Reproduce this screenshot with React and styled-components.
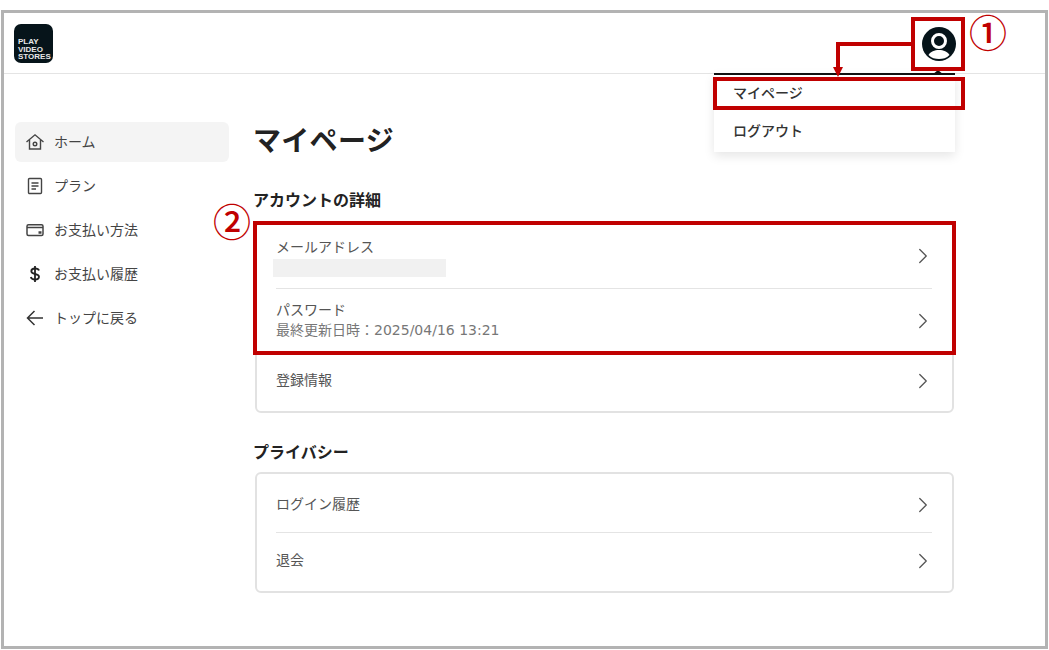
import React from "react";
import styled, { createGlobalStyle } from "styled-components";
import { ChevronRight } from "lucide-react";

const GlobalStyle = createGlobalStyle`
  html, body {
    margin: 0;
    padding: 0;
    background: #fff;
  }
  body {
    font-family: "Noto Sans CJK JP", "Noto Sans", sans-serif;
    color: #222;
  }
`;

const Frame = styled.div`
  position: relative;
  box-sizing: border-box;
  width: 1047px;
  height: 639px;
  margin: 10px 0 0 1px;
  border: 3px solid #b3b3b3;
  background: #fff;
`;

const Header = styled.header`
  box-sizing: border-box;
  height: 61px;
  padding: 11px 10px 0;
  border-bottom: 1px solid #e4e4e4;
`;

const Logo = styled.div`
  box-sizing: border-box;
  width: 39px;
  height: 39px;
  border-radius: 7px;
  background: #06141a;
  color: #e8e8e8;
  font-family: "Liberation Sans", sans-serif;
  font-size: 8px;
  font-weight: 700;
  line-height: 7.5px;
  padding: 14px 0 0 4px;
  white-space: nowrap;
`;

const Body = styled.div`
  display: flex;
`;

const Sidebar = styled.nav`
  box-sizing: border-box;
  width: 250px;
  padding: 48px 0 0 11px;
`;

const NavItem = styled.div`
  box-sizing: border-box;
  display: flex;
  align-items: center;
  gap: 9px;
  width: 214px;
  height: 40px;
  margin-bottom: 4px;
  padding-left: 10px;
  border-radius: 6px;
  background: ${(p) => (p.$active ? "#f4f4f4" : "transparent")};
  color: #444;
  font-size: 14px;
  svg {
    flex: none;
  }
`;

const NavLabel = styled.span`
  margin-top: -3px;
`;

const Main = styled.main`
  width: 700px;
  padding-top: 44px;
`;

const Title = styled.h1`
  margin: -1px 0 27px -1px;
  font-size: 28px;
  line-height: 44px;
  letter-spacing: 0.3px;
  font-weight: 700;
  color: #222;
`;

const SectionTitle = styled.h2`
  margin: 0 0 ${(p) => p.$after}px -1px;
  font-size: 16px;
  line-height: 22px;
  font-weight: 700;
  color: #222;
`;

const Card = styled.div`
  box-sizing: border-box;
  margin: 0 0 ${(p) => p.$gap || 0}px 1px;
  width: 699px;
  padding: 0 20px 0 19px;
  border: 2px solid #e2e2e2;
  border-radius: 6px;
`;

const Row = styled.div`
  box-sizing: border-box;
  display: flex;
  align-items: center;
  justify-content: space-between;
  height: ${(p) => p.$h}px;
  padding-top: ${(p) => p.$pt || 0}px;
  padding-bottom: ${(p) => p.$pb || 0}px;
  border-bottom: ${(p) => (p.$last ? "none" : "1px solid #e4e4e4")};
  color: #555;
  svg {
    flex: none;
    margin-top: ${(p) => p.$chevron || 0}px;
    margin-right: -4px;
    color: #555;
  }
`;

const RowText = styled.div`
  display: flex;
  flex-direction: column;
  font-size: 14px;
  line-height: 20px;
`;

const SingleLine = styled(RowText)`
  margin-top: -4px;
`;

const Sub = styled.span`
  margin-top: 1px;
  font-family: "DejaVu Sans", "Noto Sans CJK JP", sans-serif;
  font-size: 14px;
  line-height: 20px;
  color: #777;
`;

const Masked = styled.span`
  display: block;
  width: 173px;
  height: 18px;
  margin: 3px 0 0 -3px;
  background: #f1f1f1;
`;

const Avatar = styled.div`
  position: absolute;
  top: 14px;
  left: 918px;
  width: 34px;
  height: 34px;
`;

const Menu = styled.div`
  position: absolute;
  top: 60px;
  left: 710px;
  width: 241px;
  height: 77px;
  border-top: 2px solid #111;
  background: #fff;
  box-shadow: 0 4px 10px rgba(0, 0, 0, 0.1);
`;

const Notch = styled.div`
  position: absolute;
  top: -5px;
  left: 218px;
  width: 0;
  height: 0;
  border-left: 6px solid transparent;
  border-right: 6px solid transparent;
  border-bottom: 5px solid #111;
`;

const MenuItem = styled.div`
  box-sizing: border-box;
  display: flex;
  align-items: center;
  height: 38px;
  padding: 0 0 5px 19px;
  font-size: 14px;
  font-weight: 500;
  color: #333;
`;

const RedBox = styled.div`
  position: absolute;
  box-sizing: border-box;
  top: ${(p) => p.$top}px;
  left: ${(p) => p.$left}px;
  width: ${(p) => p.$w}px;
  height: ${(p) => p.$h}px;
  border: 4px solid #c00000;
`;

const Marker = styled.div`
  position: absolute;
  top: ${(p) => p.$top}px;
  left: ${(p) => p.$left}px;
  font-size: 38px;
  font-weight: 500;
  line-height: 40px;
  color: #c00000;
`;

const Arrow = styled.svg`
  position: absolute;
  top: 26px;
  left: 826px;
`;

const HomeIcon = () => (
  <svg width="20" height="20" viewBox="0 0 20 20" fill="none" stroke="#444" strokeWidth="1.4">
    <path d="M1.500 10 10 2.800 18.500 10" />
    <path d="M4.500 8v9h11V8" />
    <circle cx="10" cy="12" r="1.800" />
  </svg>
);

const PlanIcon = () => (
  <svg width="20" height="20" viewBox="0 0 20 20" fill="none" stroke="#444" strokeWidth="1.4">
    <rect x="3.500" y="2.500" width="13" height="15" rx="1" />
    <path d="M6.500 7h7M6.500 10h7M6.500 13h4.500" />
  </svg>
);

const WalletIcon = () => (
  <svg width="20" height="20" viewBox="0 0 20 20" fill="none" stroke="#444" strokeWidth="1.5">
    <rect x="2" y="4.800" width="16" height="10.800" rx="1.500" />
    <path d="M2 7.500h16" />
    <path d="M13.500 12.500h3" strokeWidth="2.500" />
  </svg>
);

const DollarIcon = () => (
  <svg width="20" height="20" viewBox="0 0 20 20" fill="none" stroke="#222" strokeWidth="1.8">
    <path d="M14 6.500C13.500 5 12 4.500 10 4.500 7.800 4.500 6.300 5.500 6.300 7.200c0 3.800 7.700 1.800 7.700 5.600 0 1.700-1.700 2.700-4 2.700-2.200 0-3.700-.8-4.200-2.500" />
    <path d="M10 2v16" />
  </svg>
);

const BackIcon = () => (
  <svg width="20" height="20" viewBox="0 0 20 20" fill="none" stroke="#333" strokeWidth="1.5">
    <path d="M18 10H2.500M9.500 3 2.500 10l7 7" />
  </svg>
);

const navItems = [
  { label: "ホーム", icon: <HomeIcon />, active: true },
  { label: "プラン", icon: <PlanIcon /> },
  { label: "お支払い方法", icon: <WalletIcon /> },
  { label: "お支払い履歴", icon: <DollarIcon /> },
  { label: "トップに戻る", icon: <BackIcon /> },
];

const Chevron = () => <ChevronRight size={26} strokeWidth={1.2} />;

export default function App() {
  return (
    <>
      <GlobalStyle />
      <Frame>
        <Header>
          <Logo>
            PLAY
            <br />
            VIDEO
            <br />
            STORES
          </Logo>
        </Header>
        <Body>
          <Sidebar>
            {navItems.map((item) => (
              <NavItem key={item.label} $active={item.active}>
                {item.icon}
                <NavLabel>{item.label}</NavLabel>
              </NavItem>
            ))}
          </Sidebar>
          <Main>
            <Title>マイページ</Title>
            <SectionTitle $after={11}>アカウントの詳細</SectionTitle>
            <Card $gap={27}>
              <Row $h={66} $pt={1}>
                <RowText>
                  メールアドレス
                  <Masked />
                </RowText>
                <Chevron />
              </Row>
              <Row $h={63} $pb={1} $chevron={3}>
                <RowText>
                  パスワード
                  <Sub>最終更新日時：2025/04/16 13:21</Sub>
                </RowText>
                <Chevron />
              </Row>
              <Row $h={59} $pb={2} $last>
                <SingleLine>登録情報</SingleLine>
                <Chevron />
              </Row>
            </Card>
            <SectionTitle $after={10}>プライバシー</SectionTitle>
            <Card>
              <Row $h={59} $pt={3}>
                <SingleLine>ログイン履歴</SingleLine>
                <Chevron />
              </Row>
              <Row $h={58} $pb={2} $last>
                <SingleLine>退会</SingleLine>
                <Chevron />
              </Row>
            </Card>
          </Main>
        </Body>

        <Avatar>
          <svg width="34" height="34" viewBox="0 0 34 34">
            <circle cx="17" cy="17" r="17" fill="#06141a" />
            <circle cx="17" cy="14" r="6.500" fill="none" stroke="#fff" strokeWidth="3" />
            <path d="M6.500 28c2-3.500 6-5 10.500-5s8.500 1.500 10.500 5c-3 3-6.500 4-10.500 4s-7.500-1-10.500-4z" fill="#fff" />
          </svg>
        </Avatar>
        <Menu>
          <Notch />
          <MenuItem>マイページ</MenuItem>
          <MenuItem>ログアウト</MenuItem>
        </Menu>

        <RedBox $top={4} $left={907} $w={54} $h={54} />
        <RedBox $top={64} $left={709} $w={252} $h={33} />
        <RedBox $top={208} $left={249} $w={703} $h={134} />
        <Arrow width="85" height="42" viewBox="0 0 85 42">
          <path d="M81 5H8v24" fill="none" stroke="#c00000" strokeWidth="4" />
          <path d="M3 28h10L8 38z" fill="#c00000" />
        </Arrow>
        <Marker $top={-2} $left={965}>①</Marker>
        <Marker $top={187} $left={209}>②</Marker>
      </Frame>
    </>
  );
}
